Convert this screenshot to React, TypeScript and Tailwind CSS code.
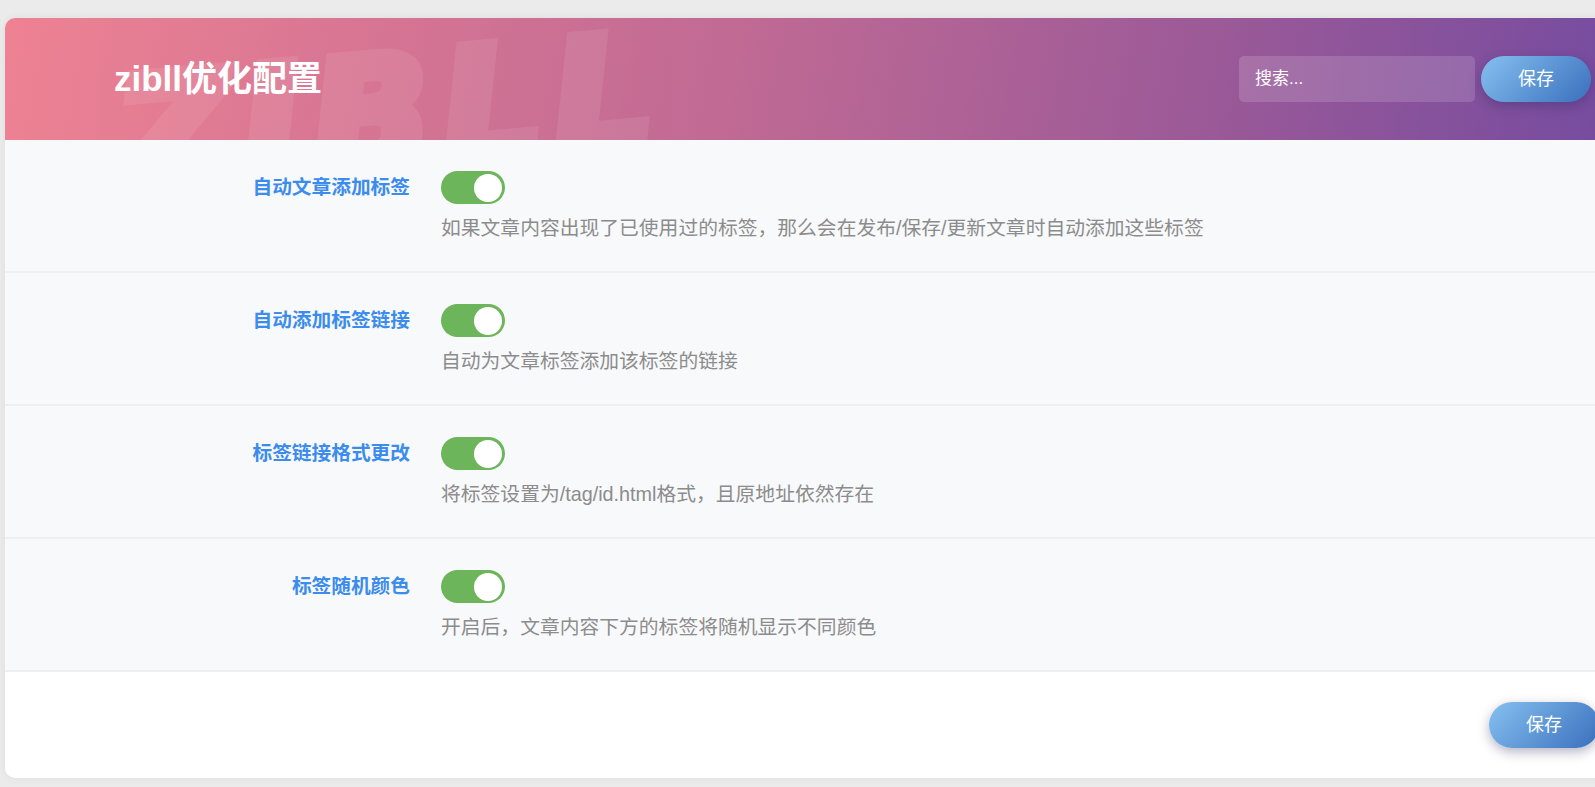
import React, { useState } from "react";

const FONT = "font-['Liberation_Sans','Noto_Sans_CJK_SC',sans-serif]";

type Option = { id: string; label: string; desc: string };

const OPTIONS: Option[] = [
  {
    id: "auto_tags",
    label: "自动文章添加标签",
    desc: "如果文章内容出现了已使用过的标签，那么会在发布/保存/更新文章时自动添加这些标签",
  },
  { id: "tag_link", label: "自动添加标签链接", desc: "自动为文章标签添加该标签的链接" },
  { id: "tag_rewrite", label: "标签链接格式更改", desc: "将标签设置为/tag/id.html格式，且原地址依然存在" },
  { id: "tag_color", label: "标签随机颜色", desc: "开启后，文章内容下方的标签将随机显示不同颜色" },
];

function Toggle({ on, onChange }: { on: boolean; onChange: (v: boolean) => void }) {
  return (
    <button
      type="button"
      onClick={() => onChange(!on)}
      className={`relative flex h-[33px] w-[64px] shrink-0 items-center rounded-full px-[3px] ${
        on ? "justify-end bg-[#6cb55a]" : "justify-start bg-[#d5d7db]"
      }`}
    >
      <span className="block h-[28px] w-[28px] rounded-full bg-white" />
    </button>
  );
}

function SaveButton() {
  return (
    <button
      type="button"
      className="h-[46px] w-[110px] rounded-full bg-[linear-gradient(135deg,#86c1f0,#3a6fbd)] text-[18px] text-white shadow-[0_4px_12px_rgba(40,40,90,0.35)]"
    >
      保存
    </button>
  );
}

export default function App() {
  const [values, setValues] = useState<Record<string, boolean>>({
    auto_tags: true,
    tag_link: true,
    tag_rewrite: true,
    tag_color: true,
  });

  return (
    <div className={`min-h-[787px] w-full overflow-hidden bg-[#ebebeb] pt-[18px] ${FONT}`}>
      <div className="ml-[5px] w-[1620px] overflow-hidden rounded-[10px] bg-white shadow-[0_0_10px_rgba(0,0,0,0.06)]">
        {/* 头部，背景水印 ZIBLL */}
        <div className="relative flex h-[122px] items-center justify-between overflow-hidden bg-[linear-gradient(100deg,#ee8293_0%,#c06a94_45%,#9a5998_75%,#744ba0_100%)] pl-[109px] pr-[34px]">
          <span className="pointer-events-none absolute left-[112px] top-[18px] -rotate-[5deg] select-none font-['DejaVu_Sans',sans-serif] text-[155px] font-bold italic leading-none tracking-[0.08em] text-white opacity-[0.08] [-webkit-text-stroke:12px_white]">
            ZIBLL
          </span>
          <h1 className="relative text-[35px] font-bold text-white">zibll优化配置</h1>
          <div className="relative flex items-center gap-[6px]">
            <input
              type="text"
              placeholder="搜索..."
              className="h-[46px] w-[236px] rounded-[5px] bg-white/15 px-4 text-[17px] text-white outline-none placeholder:text-white"
            />
            <SaveButton />
          </div>
        </div>

        {/* 选项 */}
        <div className="bg-[#f8f9fb]">
          {OPTIONS.map((o) => (
            <div key={o.id} className="flex border-b-2 border-[#eeeff1] pb-[28px] pt-[31px]">
              <div className="flex h-[33px] w-[405px] shrink-0 items-center justify-end text-[19.7px] font-bold text-[#3b8ced]">
                {o.label}
              </div>
              <div className="pl-[31px]">
                <Toggle on={values[o.id]} onChange={(v) => setValues((p) => ({ ...p, [o.id]: v }))} />
                <p className="mt-[10px] text-[19.8px] leading-[29px] text-[#8c8c8c]">{o.desc}</p>
              </div>
            </div>
          ))}
        </div>

        {/* 底部 */}
        <div className="flex justify-end pb-[30px] pl-[30px] pr-[26px] pt-[30px]">
          <SaveButton />
        </div>
      </div>
    </div>
  );
}
